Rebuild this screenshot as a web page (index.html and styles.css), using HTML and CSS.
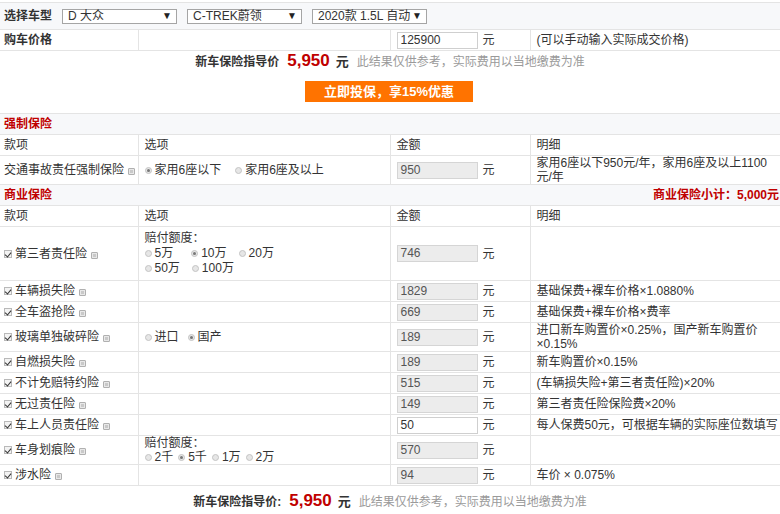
FILE: index.html
```html
<!DOCTYPE html>
<html lang="zh-CN">
<head>
<meta charset="utf-8">
<title>保险计算</title>
<link rel="stylesheet" href="styles.css">
</head>
<body>
<div class="page">
  <table class="calc">
    <colgroup><col class="c1"><col class="c2"><col class="c3"><col class="c4"></colgroup>
    <tr class="car-row">
      <td colspan="4">
        <div class="car-pick">
          <span class="lbl bold">选择车型</span>
          <span class="sel">D 大众<i class="arrow">▼</i></span>
          <span class="sel">C-TREK蔚领<i class="arrow">▼</i></span>
          <span class="sel">2020款 1.5L 自动<i class="arrow">▼</i></span>
        </div>
      </td>
    </tr>
    <tr class="row">
      <td class="bold">购车价格</td>
      <td></td>
      <td><span class="inp white">125900</span><span class="yuan">元</span></td>
      <td>(可以手动输入实际成交价格)</td>
    </tr>
    <tr>
      <td colspan="4" class="guide-cell">
        <div class="guide"><b>新车保险指导价</b><span class="num">5,950</span><b class="u">元</b><span class="tip">此结果仅供参考，实际费用以当地缴费为准</span></div>
        <div class="btn-wrap"><span class="btn">立即投保，享15%优惠</span></div>
      </td>
    </tr>
    <tr class="sec">
      <td colspan="4"><span class="sec-title">强制保险</span></td>
    </tr>
    <tr class="row head">
      <td>款项</td><td>选项</td><td>金额</td><td>明细</td>
    </tr>
    <tr class="row">
      <td>交通事故责任强制保险<i class="help"></i></td>
      <td><span class="opt wide"><i class="radio on"></i>家用6座以下</span><span class="opt"><i class="radio"></i>家用6座及以上</span></td>
      <td><span class="inp">950</span><span class="yuan">元</span></td>
      <td>家用6座以下950元/年，家用6座及以上1100元/年</td>
    </tr>
    <tr class="sec">
      <td colspan="4"><div class="sec-line"><span class="sec-title">商业保险</span><span class="sub">商业保险小计：5,000元</span></div></td>
    </tr>
    <tr class="row head">
      <td>款项</td><td>选项</td><td>金额</td><td>明细</td>
    </tr>
    <tr class="row">
      <td><i class="chk"></i>第三者责任险<i class="help"></i></td>
      <td class="opts3">赔付额度：<br><span class="opt w5"><i class="radio"></i>5万</span><span class="opt"><i class="radio on"></i>10万</span><span class="opt"><i class="radio"></i>20万</span><br><span class="opt"><i class="radio"></i>50万</span><span class="opt"><i class="radio"></i>100万</span></td>
      <td><span class="inp">746</span><span class="yuan">元</span></td>
      <td></td>
    </tr>
    <tr class="row">
      <td><i class="chk"></i>车辆损失险<i class="help"></i></td><td></td>
      <td><span class="inp">1829</span><span class="yuan">元</span></td>
      <td>基础保费+裸车价格×1.0880%</td>
    </tr>
    <tr class="row">
      <td><i class="chk"></i>全车盗抢险<i class="help"></i></td><td></td>
      <td><span class="inp">669</span><span class="yuan">元</span></td>
      <td>基础保费+裸车价格×费率</td>
    </tr>
    <tr class="row">
      <td><i class="chk"></i>玻璃单独破碎险<i class="help"></i></td>
      <td><span class="opt mid"><i class="radio"></i>进口</span><span class="opt"><i class="radio on"></i>国产</span></td>
      <td><span class="inp">189</span><span class="yuan">元</span></td>
      <td>进口新车购置价×0.25%，国产新车购置价×0.15%</td>
    </tr>
    <tr class="row">
      <td><i class="chk"></i>自燃损失险<i class="help"></i></td><td></td>
      <td><span class="inp">189</span><span class="yuan">元</span></td>
      <td>新车购置价×0.15%</td>
    </tr>
    <tr class="row">
      <td><i class="chk"></i>不计免赔特约险<i class="help"></i></td><td></td>
      <td><span class="inp">515</span><span class="yuan">元</span></td>
      <td>(车辆损失险+第三者责任险)×20%</td>
    </tr>
    <tr class="row">
      <td><i class="chk"></i>无过责任险<i class="help"></i></td><td></td>
      <td><span class="inp">149</span><span class="yuan">元</span></td>
      <td>第三者责任险保险费×20%</td>
    </tr>
    <tr class="row">
      <td><i class="chk"></i>车上人员责任险<i class="help"></i></td><td></td>
      <td><span class="inp white">50</span><span class="yuan">元</span></td>
      <td class="nowrap">每人保费50元，可根据车辆的实际座位数填写</td>
    </tr>
    <tr class="row">
      <td><i class="chk"></i>车身划痕险<i class="help"></i></td>
      <td>赔付额度：<br><span class="opt tight"><i class="radio"></i>2千</span><span class="opt tight"><i class="radio on"></i>5千</span><span class="opt tight"><i class="radio"></i>1万</span><span class="opt tight"><i class="radio"></i>2万</span></td>
      <td><span class="inp">570</span><span class="yuan">元</span></td>
      <td></td>
    </tr>
    <tr class="row">
      <td><i class="chk"></i>涉水险<i class="help"></i></td><td></td>
      <td><span class="inp">94</span><span class="yuan">元</span></td>
      <td>车价 × 0.075%</td>
    </tr>
  </table>
  <div class="guide bottom"><b>新车保险指导价:</b><span class="num">5,950</span><b class="u">元</b><span class="tip">此结果仅供参考，实际费用以当地缴费为准</span></div>
</div>
</body>
</html>
```

FILE: styles.css
```css
* { box-sizing: border-box; }
html, body { margin: 0; padding: 0; background: #fff; }
body {
  font-family: "Liberation Sans", "Noto Sans CJK SC", sans-serif;
  font-size: 12px;
  color: #333;
  overflow: hidden;
  width: 780px;
}
.page { padding-top: 2px; }
.calc {
  width: 780px;
  border-collapse: collapse;
  table-layout: fixed;
}
.c1 { width: 138px; }
.c2 { width: 252px; }
.c3 { width: 140px; }
.c4 { width: 250px; }
.calc td {
  border: 1px solid #e4e4e4;
  padding: 0 4px 0 6px;
  height: 21px;
  line-height: 14px;
  vertical-align: middle;
  white-space: normal;
}
.calc td:first-child { padding-left: 4px; padding-right: 0; border-left: none; white-space: nowrap; }
.calc td:last-child { border-right: none; }
.bold { font-weight: bold; }
.car-row td { background: #f7f8fa; height: 27px; }
.car-pick { display: flex; align-items: center; }
.lbl { margin-right: 10px; }
.sel {
  position: relative;
  display: inline-block;
  width: 115px;
  height: 15px;
  line-height: 13px;
  border: 1px solid #a5a5a5;
  background: #fff;
  padding-left: 5px;
  margin-right: 10px;
  color: #333;
}
.arrow {
  position: absolute;
  right: 4px;
  top: 0;
  font-style: normal;
  font-size: 10px;
  line-height: 12px;
  color: #222;
}
.inp {
  display: inline-block;
  width: 81px;
  height: 17px;
  line-height: 15px;
  border: 1px solid #d5d5d5;
  background: #ececec;
  padding-left: 3px;
  color: #555;
  vertical-align: middle;
}
.inp.white { background: #fff; color: #333; border-color: #cfcfcf; }
.yuan { margin-left: 5px; vertical-align: middle; }
.guide-cell { padding: 0 !important; height: 63px !important; }
.guide {
  display: flex;
  justify-content: center;
  align-items: baseline;
  height: 24px;
  padding-top: 2px;
  font-size: 12px;
}
.guide b { color: #333; }
.guide .num {
  color: #c00000;
  font-weight: bold;
  font-size: 17px;
  margin: 0 6px 0 8px;
}
.guide .u { font-size: 13px; margin-right: 8px; }
.guide .tip { color: #9a9a9a; }
.btn-wrap { display: flex; justify-content: center; padding: 5px 0 11px; }
.btn {
  display: inline-block;
  width: 168px;
  height: 21px;
  line-height: 21px;
  text-align: center;
  background: #ff7300;
  color: #fff;
  font-weight: bold;
  font-size: 13px;
  margin-left: -2px;
}
.sec td { background: #f7f8fa; }
.sec-line { display: flex; justify-content: space-between; align-items: center; }
.sec-title { color: #c00000; font-weight: bold; }
.sub { color: #c00000; font-weight: bold; margin-right: 1px; }
.help {
  display: inline-block;
  width: 7px;
  height: 7px;
  margin-left: 4px;
  background: #c9c9c9;
  border: 1px solid #b0b0b0;
  border-radius: 1px;
  box-shadow: inset 0 0 0 1px #e8e8e8;
  vertical-align: -1px;
}
.chk {
  display: inline-block;
  position: relative;
  width: 8px;
  height: 8px;
  border: 1px solid #b9b9b9;
  background: #f3f3f3;
  margin-right: 3px;
  vertical-align: 0;
}
.chk::after {
  content: "";
  position: absolute;
  left: 1px;
  top: 0;
  width: 3px;
  height: 5px;
  border-right: 1.5px solid #333;
  border-bottom: 1.5px solid #333;
  transform: rotate(40deg);
}
.opt { display: inline-block; margin-right: 12px; white-space: nowrap; }
.opt.w5 { margin-right: 18px; }
.opt.wide { margin-right: 14px; }
.opt.mid { margin-right: 9px; }
.opt.tight { margin-right: 5px; }
.radio {
  display: inline-block;
  position: relative;
  width: 7px;
  height: 7px;
  border-radius: 50%;
  border: 1px solid #c4c4c4;
  background: #e6e6e6;
  margin-right: 3px;
  vertical-align: 0;
}
.radio.on::after {
  content: "";
  position: absolute;
  left: 1px;
  top: 1px;
  width: 3px;
  height: 3px;
  border-radius: 50%;
  background: #777;
}
.opts3 { line-height: 15px !important; padding-top: 4px !important; padding-bottom: 4px !important; }
.nowrap { white-space: nowrap !important; }
.bottom { padding-top: 5px; height: 26px; }
```
